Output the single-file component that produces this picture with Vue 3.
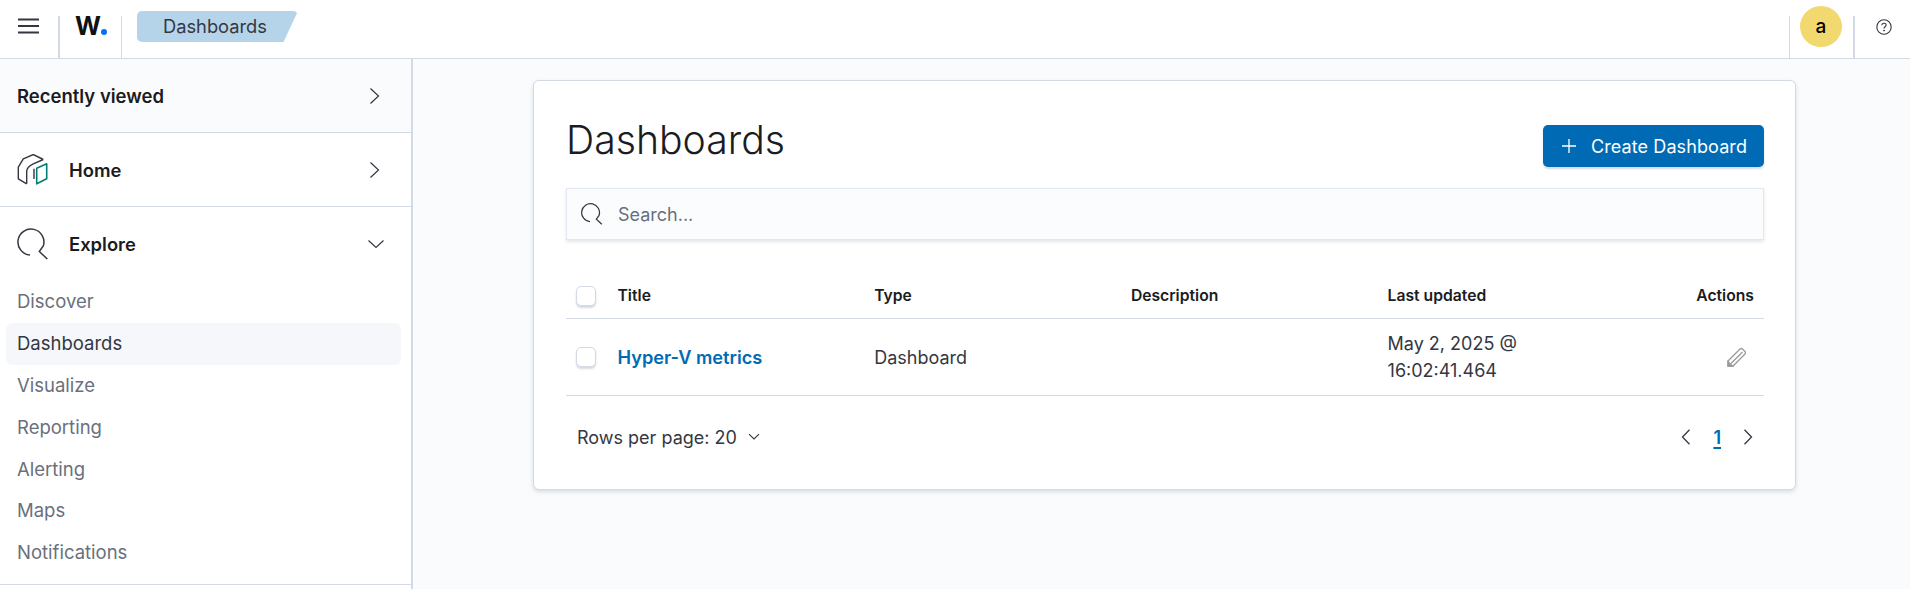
<script setup>
const links = ['Discover', 'Dashboards', 'Visualize', 'Reporting', 'Alerting', 'Maps', 'Notifications']
</script>

<template>
  <div class="page">
    <header class="top">
      <button class="menu" aria-label="Menu">
        <svg width="22" height="18" viewBox="0 0 22 18"><path d="M0 2.500h21M0 9h21M0 15.500h21" stroke="#343741" stroke-width="2.200" fill="none"/></svg>
      </button>
      <div class="logo"><span class="w">W</span><span class="dot"></span></div>
      <div class="crumb-wrap">
        <div class="crumb">Dashboards</div>
      </div>
      <div class="spacer"></div>
      <div class="user"><span class="avatar">a</span></div>
      <div class="help">
        <svg width="16" height="16" viewBox="0 0 16 16" fill="none" stroke="#343741"><circle cx="8" cy="8" r="7.200" stroke-width="1.100"/><path d="M5.900 6.200c0-1.200.9-2 2.100-2s2.100.8 2.100 1.900c0 1.700-2.100 1.500-2.100 3.400" stroke-width="1.100"/><circle cx="8" cy="11.600" r=".5" fill="#343741"/></svg>
      </div>
    </header>
    <div class="body">
      <aside class="side">
        <div class="sec recent">
          <span class="recent-label">Recently viewed</span>
          <svg class="chev" width="12" height="18" viewBox="0 0 12 18" fill="none" stroke="#343741" stroke-width="1.200"><path d="M1.500 1.500 9.500 9l-8 7.500"/></svg>
        </div>
        <div class="sec">
          <svg class="sec-icon" width="32" height="32" viewBox="0 0 32 32" fill="none" stroke-width="1.400" stroke-linejoin="round">
            <path d="M9.700 29.800 1.300 24.800V13.200L6.300 4.800 16.300.5l10 5M9.700 29.800V17.500C9.700 14 12.500 11.500 16.300 9.800l10-4.300M17 14.800V25" stroke="#343741"/>
            <path d="M19.700 29.800V14.200l10-4.400v15z" stroke="#017d73" stroke-width="1.600"/>
          </svg>
          <span class="sec-label">Home</span>
          <svg class="chev" width="12" height="18" viewBox="0 0 12 18" fill="none" stroke="#343741" stroke-width="1.200"><path d="M1.500 1.500 9.500 9l-8 7.500"/></svg>
        </div>
        <div class="explore">
          <div class="sec-head">
            <svg class="sec-icon" width="32" height="32" viewBox="0 0 32 32" fill="none" stroke="#343741" stroke-width="1.500">
              <path d="M13 27A13 13 0 1 1 26.300 18L22.300 23.500 30.300 31"/>
            </svg>
            <span class="sec-label">Explore</span>
            <svg class="chev-d" width="18" height="10" viewBox="0 0 18 10" fill="none" stroke="#343741" stroke-width="1.200"><path d="M1.500 1.500 9 8.500l7.500-7"/></svg>
          </div>
          <nav class="links">
            <a v-for="l in links" :key="l" class="link" :class="{ active: l === 'Dashboards' }">{{ l }}</a>
          </nav>
        </div>
      </aside>
      <main class="main">
        <section class="card">
          <div class="card-head">
            <h1>Dashboards</h1>
            <button class="create">
              <svg width="14" height="14" viewBox="0 0 14 14" stroke="#fff" stroke-width="1.300"><path d="M7 0v14M0 7h14"/></svg>
              <span>Create Dashboard</span>
            </button>
          </div>
          <div class="search">
            <svg width="22" height="22" viewBox="0 0 32 32" fill="none" stroke="#343741" stroke-width="1.800"><path d="M13 27A13 13 0 1 1 26.300 18L22.300 23.500 30.300 31"/></svg>
            <span>Search...</span>
          </div>
          <div class="table">
            <div class="row head">
              <div class="c-check"><span class="box"></span></div>
              <div>Title</div>
              <div>Type</div>
              <div>Description</div>
              <div>Last updated</div>
              <div class="right">Actions</div>
            </div>
            <div class="row item">
              <div class="c-check"><span class="box"></span></div>
              <div class="name">Hyper-V metrics</div>
              <div>Dashboard</div>
              <div></div>
              <div class="date">May 2, 2025 @<br>16:02:41.464</div>
              <div class="right">
                <svg class="pencil" width="20" height="20" viewBox="0 0 20 20" fill="none" stroke="#9a9a9a" stroke-width="1.300"><path d="M1 14 13 2q1.200-1 2.500 0L18 4.500q1 1.300 0 2.500L6 19H1zM4 16.500 15.500 5"/><path d="M1 14.500V19h4.500z" fill="#9a9a9a"/></svg>
              </div>
            </div>
          </div>
          <div class="pager">
            <div class="rows">
              <span>Rows per page: 20</span>
              <svg width="12" height="8" viewBox="0 0 12 8" fill="none" stroke="#343741" stroke-width="1.100"><path d="M1 1.200 6 6l5-4.800"/></svg>
            </div>
            <div class="pages">
              <svg width="10" height="16" viewBox="0 0 10 16" fill="none" stroke="#343741" stroke-width="1.300"><path d="M8.500.800 1.500 8l7 7.200"/></svg>
              <span class="num">1</span>
              <svg width="10" height="16" viewBox="0 0 10 16" fill="none" stroke="#343741" stroke-width="1.300"><path d="M1.500.800 8.500 8l-7 7.200"/></svg>
            </div>
          </div>
        </section>
      </main>
    </div>
  </div>
</template>

<style>
html, body { margin: 0; background: #fafbfd; overflow: hidden; }
</style>

<style scoped>
.page { width: 1910px; height: 589px; overflow: hidden; font-family: Inter, "Noto Sans", sans-serif; color: #343741; font-size: 18px; }
.top { height: 58px; display: flex; background: #fff; border-bottom: 1px solid #d3dae6; }
.menu { width: 58px; height: 42px; border: 0; background: none; margin-top: 16px; padding: 0; display: flex; align-items: flex-start; justify-content: center; border-right: 2px solid #d3dae6; box-sizing: content-box; }
.menu svg { margin-top: 1px; margin-left: -1px; }
.logo { width: 62px; height: 42px; margin-top: 16px; border-right: 1px solid #d3dae6; display: flex; box-sizing: border-box; }
.w { font-size: 25px; font-weight: 700; color: #111; line-height: 26px; margin: -3px 0 0 15px; letter-spacing: -.5px; }
.dot { width: 6px; height: 6px; border-radius: 50%; background: #0a6ff0; margin: 13px 0 0 1px; }
.crumb-wrap { margin: 11px 0 0 15px; }
.crumb { width: 161px; height: 31px; background: #b6d4e9; border-radius: 5px; line-height: 30px; font-size: 18.300px; box-sizing: border-box; padding-left: 26px; clip-path: polygon(0 0, 100% 0, 91% 100%, 0 100%); }
.spacer { flex: 1; }
.user { width: 63px; height: 42px; margin-top: 16px; border-left: 1px solid #d3dae6; position: relative; border-right: 2px solid #d3dae6; }
.avatar { position: absolute; left: 10px; top: -10px; width: 42px; height: 41px; border-radius: 50%; background: #f1d86f; color: #000; display: flex; align-items: center; justify-content: center; font-size: 19px; font-weight: 500; }
.help { width: 55px; display: flex; justify-content: center; padding-top: 19px; box-sizing: border-box; }
.help svg { margin-left: 3px; }
.body { display: flex; height: 530px; }
.side { width: 411px; flex: none; background: #fff; border-right: 2px solid #d3dae6; }
.sec { height: 74px; box-sizing: border-box; border-bottom: 1px solid #d3dae6; display: flex; align-items: center; padding: 0 30px 0 17px; }
.recent { background: #fafbfd; }
.recent-label { font-weight: 600; font-size: 18.500px; color: #1a1c21; flex: 1; }
.sec-icon { flex: none; margin-right: 20px; }
.sec-label { flex: 1; font-weight: 600; font-size: 18.400px; color: #1a1c21; }
.chev { flex: none; }
.explore { border-bottom: 1px solid #d3dae6; height: 378px; box-sizing: border-box; }
.sec-head { height: 74px; display: flex; align-items: center; padding: 0 26px 0 17px; }
.chev-d { flex: none; }
.links { display: flex; flex-direction: column; padding: 0 10px 0 6px; }
.link { height: 41.900px; line-height: 41px; padding-left: 11px; font-size: 18.500px; color: #69707d; border-radius: 6px; }
.link.active { background: #f5f7fa; color: #343741; }
.main { flex: 1; min-width: 0; padding: 21px 114px 0 120px; }
.card { height: 410px; box-sizing: border-box; background: #fff; border: 1px solid #d3dae6; border-radius: 6px; padding: 32px 31px 0 32px; box-shadow: 0 2px 4px rgba(152,162,179,.35); }
.card-head { display: flex; justify-content: space-between; height: 75px; }
h1 { margin: 3px 0 0; font-size: 39.200px; font-weight: 300; line-height: 48px; color: #1a1c21; }
.create { width: 221px; height: 42px; margin-top: 12px; background: #006bb4; color: #fff; border: 0; border-radius: 5px; font: 400 18px Inter, sans-serif; display: flex; align-items: center; justify-content: center; gap: 15px; box-shadow: 0 2px 2px rgba(152,162,179,.4); letter-spacing: .1px; padding-left: 8px; }
.search { height: 52px; box-sizing: border-box; background: #fbfcfd; border: 1px solid #e3e7ef; box-shadow: 0 2px 3px rgba(152,162,179,.25); display: flex; align-items: center; padding-left: 14px; gap: 15px; color: #69707d; font-size: 18px; }
.table { margin-top: 25px; }
.row { display: grid; grid-template-columns: 51.500px 256.700px 256.700px 256.700px 1fr 120px; align-items: center; border-bottom: 1px solid #d3dae6; }
.head { height: 54px; font-size: 15.700px; font-weight: 600; color: #1a1c21; padding-top: 8px; box-sizing: border-box; }
.item { height: 76px; font-size: 18px; line-height: 27px; }
.c-check { padding-left: 10px; display: flex; }
.box { width: 18px; height: 18px; border: 1px solid #d3dae6; border-radius: 5px; background: #fff; box-shadow: 0 2px 2px rgba(152,162,179,.4); }
.name { font-weight: 600; color: #006bb4; font-size: 18.200px; }
.right { text-align: right; padding-right: 10px; }
.pencil { vertical-align: middle; margin: -3px 7px 0 0; }
.pager { display: flex; justify-content: space-between; align-items: center; padding: 0 11px 0 11px; height: 82px; font-size: 18px; }
.rows { display: flex; align-items: center; gap: 11px; }
.pages { display: flex; align-items: center; gap: 22px; }
.num { color: #006bb4; font-weight: 600; text-decoration: underline; text-underline-offset: 3px; text-decoration-thickness: 2px; }
</style>
